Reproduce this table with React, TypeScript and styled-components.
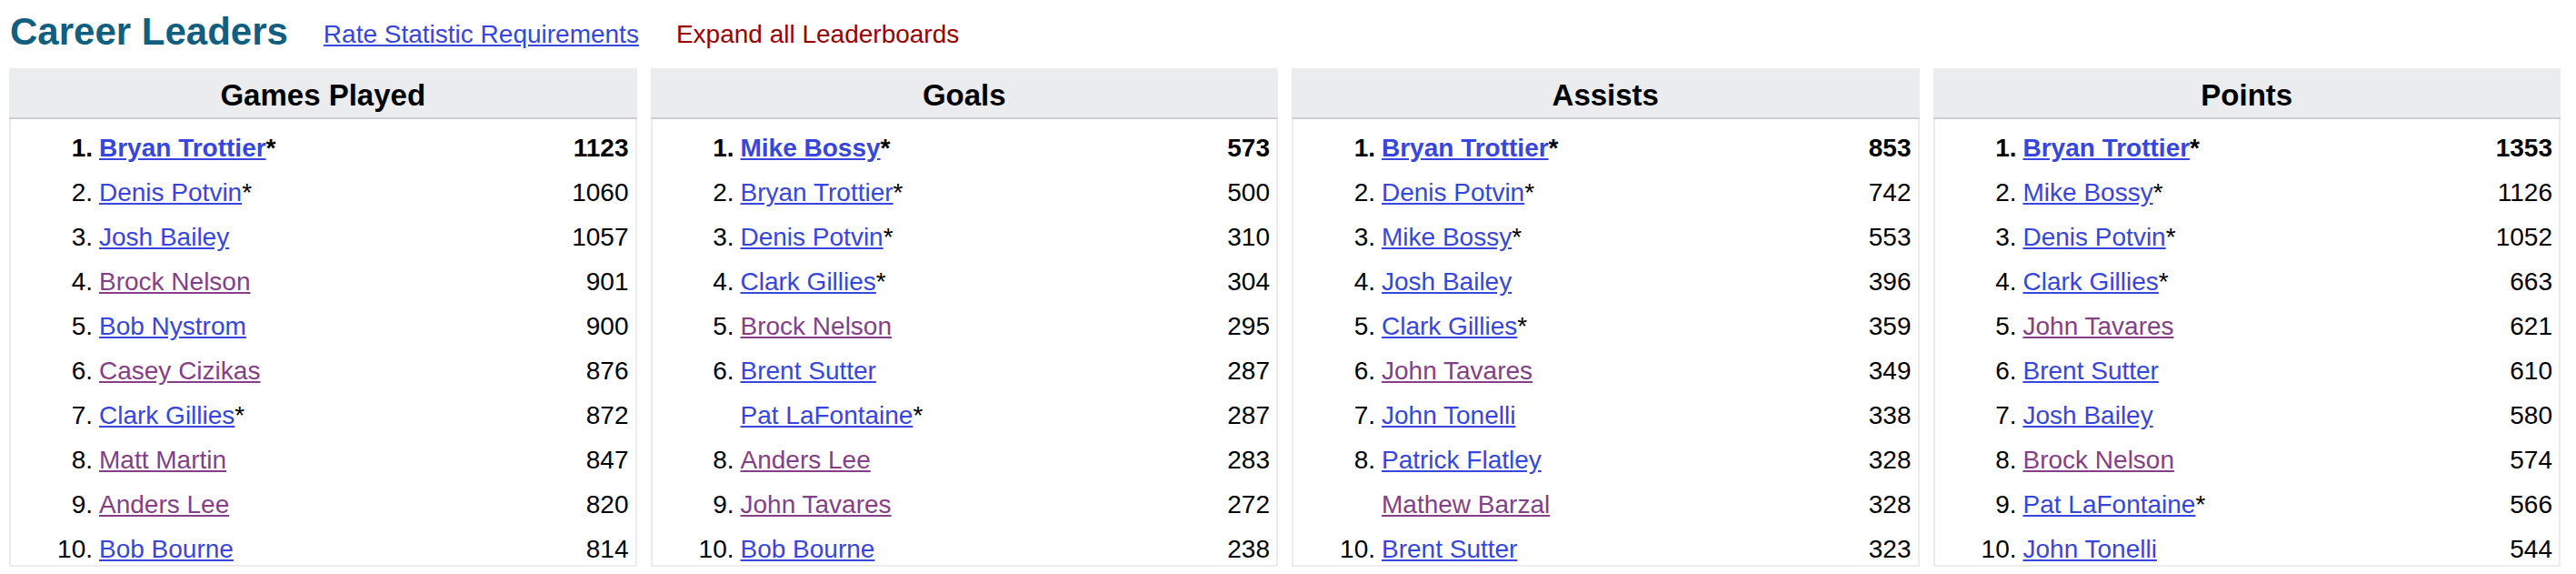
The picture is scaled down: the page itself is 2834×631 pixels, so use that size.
import React from 'react';
import styled, { createGlobalStyle } from 'styled-components';

type Leader = {
    rank?: number;
    name: string;
    hof?: boolean;
    visited?: boolean;
    value: number;
};

type Board = {
    title: string;
    leaders: Leader[];
};

const boards: Board[] = [
    {
        title: 'Games Played',
        leaders: [
            { rank: 1, name: 'Bryan Trottier', hof: true, value: 1123 },
            { rank: 2, name: 'Denis Potvin', hof: true, value: 1060 },
            { rank: 3, name: 'Josh Bailey', value: 1057 },
            { rank: 4, name: 'Brock Nelson', visited: true, value: 901 },
            { rank: 5, name: 'Bob Nystrom', value: 900 },
            { rank: 6, name: 'Casey Cizikas', visited: true, value: 876 },
            { rank: 7, name: 'Clark Gillies', hof: true, value: 872 },
            { rank: 8, name: 'Matt Martin', visited: true, value: 847 },
            { rank: 9, name: 'Anders Lee', visited: true, value: 820 },
            { rank: 10, name: 'Bob Bourne', value: 814 },
        ],
    },
    {
        title: 'Goals',
        leaders: [
            { rank: 1, name: 'Mike Bossy', hof: true, value: 573 },
            { rank: 2, name: 'Bryan Trottier', hof: true, value: 500 },
            { rank: 3, name: 'Denis Potvin', hof: true, value: 310 },
            { rank: 4, name: 'Clark Gillies', hof: true, value: 304 },
            { rank: 5, name: 'Brock Nelson', visited: true, value: 295 },
            { rank: 6, name: 'Brent Sutter', value: 287 },
            { name: 'Pat LaFontaine', hof: true, value: 287 }, // tie, no rank shown
            { rank: 8, name: 'Anders Lee', visited: true, value: 283 },
            { rank: 9, name: 'John Tavares', visited: true, value: 272 },
            { rank: 10, name: 'Bob Bourne', value: 238 },
        ],
    },
    {
        title: 'Assists',
        leaders: [
            { rank: 1, name: 'Bryan Trottier', hof: true, value: 853 },
            { rank: 2, name: 'Denis Potvin', hof: true, value: 742 },
            { rank: 3, name: 'Mike Bossy', hof: true, value: 553 },
            { rank: 4, name: 'Josh Bailey', value: 396 },
            { rank: 5, name: 'Clark Gillies', hof: true, value: 359 },
            { rank: 6, name: 'John Tavares', visited: true, value: 349 },
            { rank: 7, name: 'John Tonelli', value: 338 },
            { rank: 8, name: 'Patrick Flatley', value: 328 },
            { name: 'Mathew Barzal', visited: true, value: 328 },
            { rank: 10, name: 'Brent Sutter', value: 323 },
        ],
    },
    {
        title: 'Points',
        leaders: [
            { rank: 1, name: 'Bryan Trottier', hof: true, value: 1353 },
            { rank: 2, name: 'Mike Bossy', hof: true, value: 1126 },
            { rank: 3, name: 'Denis Potvin', hof: true, value: 1052 },
            { rank: 4, name: 'Clark Gillies', hof: true, value: 663 },
            { rank: 5, name: 'John Tavares', visited: true, value: 621 },
            { rank: 6, name: 'Brent Sutter', value: 610 },
            { rank: 7, name: 'Josh Bailey', value: 580 },
            { rank: 8, name: 'Brock Nelson', visited: true, value: 574 },
            { rank: 9, name: 'Pat LaFontaine', hof: true, value: 566 },
            { rank: 10, name: 'John Tonelli', value: 544 },
        ],
    },
];

const App = () => {
    return (
        <>
            <GlobalStyle />
            <Page>
                <TitleBar>
                    <Title>Career Leaders</Title>
                    <RateLink href="#">Rate Statistic Requirements</RateLink>
                    <ExpandLink>Expand all Leaderboards</ExpandLink>
                </TitleBar>
                <BoardGrid>
                    {boards.map((board) => (
                        <Panel key={board.title}>
                            <PanelHeader>{board.title}</PanelHeader>
                            <PanelBody>
                                {board.leaders.map((leader, i) => (
                                    <Row key={i} $first={i === 0}>
                                        <Rank>{leader.rank ? `${leader.rank}.` : ''}</Rank>
                                        <Who>
                                            <PlayerLink href="#" $visited={leader.visited}>
                                                {leader.name}
                                            </PlayerLink>
                                            {leader.hof && '*'}
                                        </Who>
                                        <Value>{leader.value}</Value>
                                    </Row>
                                ))}
                            </PanelBody>
                        </Panel>
                    ))}
                </BoardGrid>
            </Page>
        </>
    );
};

export default App;

const GlobalStyle = createGlobalStyle`
    html, body {
        margin: 0;
        padding: 0;
        background: #fff;
    }
    body {
        font-family: "Liberation Sans", Arial, Helvetica, sans-serif;
        color: #000;
    }
`;

const Page = styled.div`
    padding: 0 17px 0 10px;
`;

const TitleBar = styled.div`
    display: flex;
    align-items: flex-start;
    padding-top: 11px;
    height: 64px;
    box-sizing: border-box;
`;

const Title = styled.h2`
    margin: 0 0 0 1px;
    font-size: 42px;
    line-height: 48px;
    font-weight: bold;
    color: #115f80;
`;

const RateLink = styled.a`
    margin: 11px 0 0 39px;
    font-size: 28px;
    line-height: 32px;
    color: #3646de;
    text-decoration: underline;
`;

const ExpandLink = styled.span`
    margin: 11px 0 0 41px;
    font-size: 28px;
    line-height: 32px;
    color: #9b0000;
`;

const BoardGrid = styled.div`
    display: grid;
    grid-template-columns: repeat(4, 1fr);
    column-gap: 15px;
    margin-top: 11px;
`;

const Panel = styled.div`
    border: 2px solid #ececec;
    border-top: none;
    background: #fff;
`;

const PanelHeader = styled.div`
    margin: 0 -2px;
    height: 56px;
    padding-top: 4px;
    box-sizing: border-box;
    line-height: 52px;
    background: #ebecee;
    border-bottom: 2px solid #cdcfd2;
    text-align: center;
    font-size: 33px;
    font-weight: bold;
`;

const PanelBody = styled.div`
    display: flex;
    flex-direction: column;
`;

const Row = styled.div<{ $first?: boolean }>`
    display: grid;
    grid-template-columns: 90px 1fr auto;
    column-gap: 7px;
    height: 49px;
    padding: 16px 7px 0 0;
    box-sizing: border-box;
    font-size: 28px;
    line-height: 31px;
    font-weight: ${({ $first }) => ($first ? 'bold' : 'normal')};
`;

const Rank = styled.span`
    text-align: right;
`;

const Who = styled.span`
    white-space: nowrap;
`;

const PlayerLink = styled.a<{ $visited?: boolean }>`
    color: ${({ $visited }) => ($visited ? '#853f87' : '#3646de')};
    text-decoration: underline;
`;

const Value = styled.span`
    text-align: right;
`;
